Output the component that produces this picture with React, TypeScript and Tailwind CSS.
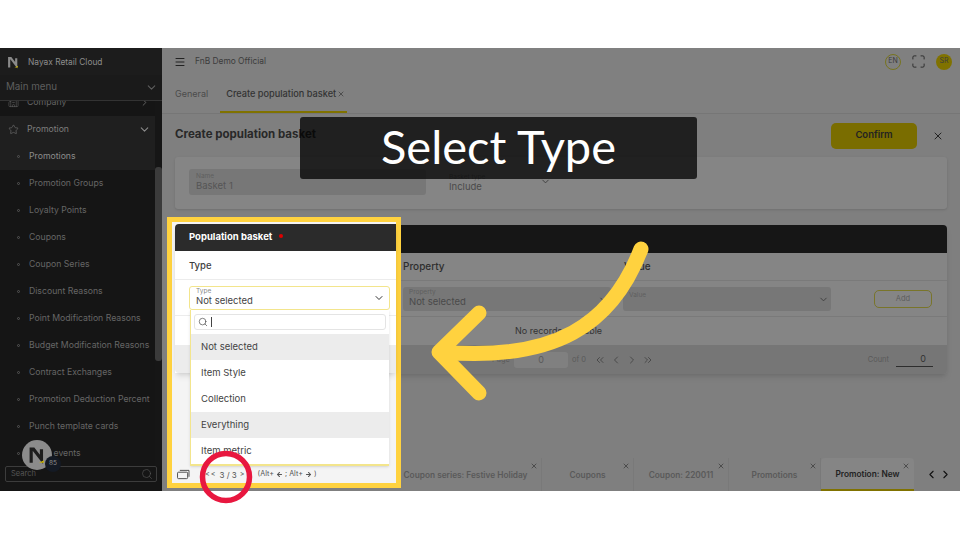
import { ArrowLeft, ArrowRight, Building2, ChevronDown, ChevronLeft, ChevronRight, ChevronsLeft, ChevronsRight, Maximize, Menu, Search, Star, X } from 'lucide-react'

const FONT = "font-['Inter','Liberation_Sans',sans-serif]"

const subItems = [
  'Promotion Groups',
  'Loyalty Points',
  'Coupons',
  'Coupon Series',
  'Discount Reasons',
  'Point Modification Reasons',
  'Budget Modification Reasons',
  'Contract Exchanges',
  'Promotion Deduction Percent',
  'Punch template cards',
  'Profit events',
]

const dockTabs = [
  { label: 'Coupon series: Festive Holiday', width: 'w-[152px]' },
  { label: 'Coupons', width: 'w-[92px]' },
  { label: 'Coupon: 220011', width: 'w-[95px]' },
  { label: 'Promotions', width: 'w-[92px]' },
]

function NLogo({ className }: { className: string }) {
  return (
    <svg viewBox="0 0 24 24" className={className} fill="none">
      <path d="M4 21V4h3l10 13V4" stroke="currentColor" strokeWidth="4" />
      <path d="M14 21l6-3v3z" fill="#c9b400" />
    </svg>
  )
}

function Sidebar() {
  return (
    <aside className="flex w-[162px] shrink-0 flex-col bg-[#151515] text-[8.7px] text-[#666]">
      <div className="flex h-[27px] shrink-0 items-center gap-[8px] bg-[#1c1c1c] pl-[7px] pt-[1px] text-[#8c8c8c]">
        <NLogo className="h-[13px] w-[13px] text-[#8a8a8a]" />
        <span className="text-[8.4px]">Nayax Retail Cloud</span>
      </div>
      <div className="relative z-10 flex h-[26px] shrink-0 items-center justify-between border-b border-[#333] bg-[#1a1a1a] pl-[6px] pr-[4px] text-[9.8px] text-[#5e5e5e]">
        <span>Main menu</span>
        <ChevronDown className="h-[13px] w-[13px]" />
      </div>
      <div className="flex min-h-0 flex-1">
        <div className="-mt-[12px] min-w-0 flex-1 overflow-hidden">
          <div className="flex h-[27px] items-center justify-between pl-[8px] pr-[5px]">
            <span className="flex items-center gap-[8px]">
              <Building2 className="h-[11px] w-[11px]" strokeWidth={1.2} />
              Company
            </span>
            <ChevronRight className="h-[11px] w-[11px]" />
          </div>
          <div className="bg-[#1f1f1f]">
            <div className="flex h-[27px] items-center justify-between pl-[8px] pr-[4px] text-[#7d7d7d]">
              <span className="flex items-center gap-[8px]">
                <Star className="h-[11px] w-[11px]" strokeWidth={1.2} />
                Promotion
              </span>
              <ChevronDown className="h-[13px] w-[13px] text-[#8a8a8a]" />
            </div>
            <div className="flex h-[27px] items-center gap-[9px] pl-[17px] text-[#8c8c8c]">
              <span className="h-[3px] w-[3px] rounded-full border border-[#555]" />
              Promotions
            </div>
          </div>
          {subItems.map((item) => (
            <div key={item} className="flex h-[27px] items-center gap-[9px] whitespace-nowrap pl-[17px]">
              <span className="h-[3px] w-[3px] shrink-0 rounded-full border border-[#555]" />
              {item}
            </div>
          ))}
        </div>
        <div className="w-[7px] shrink-0 bg-[#161616] pt-[66px]">
          <div className="h-[194px] rounded-t-[3px] rounded-b-[3px] bg-[#3b3b3b]" />
        </div>
      </div>
      <div className="shrink-0 px-[5px] pb-[9px]">
        <div className="flex h-[16px] items-center justify-between rounded-[2px] border border-[#3c3c3c] pl-[5px] pr-[3px] text-[7.5px] text-[#555]">
          Search
          <Search className="h-[12px] w-[12px]" strokeWidth={1.3} />
        </div>
      </div>
    </aside>
  )
}

function Field({ label, value, className }: { label: string; value?: string; className: string }) {
  return (
    <div className={`relative flex flex-col rounded-[3px] px-[6px] ${className}`}>
      <span className="text-[6.5px] leading-[8px] text-[#5f5f5f]">{label}</span>
      {value ? <span className="text-[9.5px] leading-[12px] text-[#4a4a4a]">{value}</span> : null}
      <ChevronDown className="absolute right-[2px] top-[7px] h-[11px] w-[11px] text-[#3d3d3d]" />
    </div>
  )
}

function MainPanel() {
  return (
    <main className="flex min-w-0 flex-1 flex-col bg-[#7f7f7f] text-[#3c3c3c]">
      <header className="flex h-[27px] shrink-0 items-center bg-[#808080] pl-[12px] pr-[8px]">
        <Menu className="h-[12px] w-[12px] text-[#222]" />
        <span className="ml-[9px] text-[8.4px]">FnB Demo Official</span>
        <div className="ml-auto flex items-center gap-[10px]">
          <span className="flex h-[16px] w-[16px] items-center justify-center rounded-full border border-[#77741f] text-[7px]">EN</span>
          <Maximize className="h-[15px] w-[15px] text-[#2a2a2a]" strokeWidth={1.5} />
          <span className="flex h-[16px] w-[16px] items-center justify-center rounded-full bg-[#807200] text-[7px]">SR</span>
        </div>
      </header>
      <nav className="flex h-[39px] shrink-0 border-b border-[#767676] bg-[#808080] pl-[7px] text-[9px]">
        <span className="flex items-center px-[6px] text-[#4b4b4b]">General</span>
        <span className="ml-[6px] flex w-[127px] items-center gap-[1px] whitespace-nowrap border-b-2 border-[#807200] pl-[6px] pt-[2px] text-[9.2px] font-medium text-[#333]">
          Create population basket
          <X className="h-[8px] w-[8px]" />
        </span>
      </nav>
      <div className="flex min-h-0 flex-1 flex-col px-[13px]">
        <div className="flex h-[43px] shrink-0 items-center justify-between">
          <h1 className="-mt-[2px] text-[11.5px] font-bold text-[#282828]">Create population basket</h1>
          <div className="flex items-center gap-[15px] pr-[3px]">
            <button type="button" className="h-[26px] w-[86px] rounded-[5px] bg-[#7a6d00] text-[9.5px] font-semibold text-[#222]">Confirm</button>
            <X className="h-[12px] w-[12px] text-[#222]" />
          </div>
        </div>
        <section className="flex h-[52px] shrink-0 items-start gap-[17px] rounded-[3px] bg-[#858585] pl-[14px] pt-[12px] shadow-sm">
          <div className="flex h-[26px] w-[237px] flex-col justify-center rounded-[3px] bg-[#777] px-[7px]">
            <span className="text-[6.5px] leading-[8px] text-[#5f5f5f]">Name</span>
            <span className="text-[9.5px] leading-[12px] text-[#555]">Basket 1</span>
          </div>
          <Field label="Basket type" value="Include" className="h-[26px] w-[110px] pt-[4px]" />
        </section>
        <section className="mt-[16px] flex h-[149px] shrink-0 flex-col rounded-[4px] bg-[#858585] shadow-md">
          <div className="h-[28px] shrink-0 rounded-t-[4px] bg-[#161616]" />
          <div className="flex h-[28px] shrink-0 items-center border-b border-[#7a7a7a] pl-[228px] text-[10px] font-medium text-[#2e2e2e]">
            <span className="w-[221px]">Property</span>
            <span>Value</span>
          </div>
          <div className="flex h-[36px] shrink-0 items-center border-b border-[#7a7a7a] pl-[228px]">
            <Field label="Property" value="Not selected" className="h-[24px] w-[208px] bg-[#777] pt-[1px]" />
            <Field label="Value" className="ml-[12px] h-[24px] w-[208px] bg-[#777] pt-[4px]" />
            <button type="button" className="ml-[43px] h-[18px] w-[58px] rounded-[5px] border border-[#79752a] text-[7.5px] text-[#5e5e5e]">Add</button>
          </div>
          <div className="flex h-[28px] shrink-0 items-center pl-[340px] text-[9px] text-[#333]">No records available</div>
          <div className="flex h-[29px] shrink-0 items-center rounded-b-[4px] bg-[#767676] pl-[317px] pr-[14px] text-[7.5px] text-[#5a5a5a]">
            <span>Page</span>
            <span className="ml-[4px] flex h-[16px] w-[54px] items-center justify-center rounded-[3px] bg-[#808080] text-[9px]">0</span>
            <span className="ml-[4px]">of 0</span>
            <span className="ml-[8px] flex items-center gap-[4px] text-[#4a4a4a]">
              <ChevronsLeft className="h-[12px] w-[12px]" />
              <ChevronLeft className="h-[12px] w-[12px]" />
              <ChevronRight className="h-[12px] w-[12px]" />
              <ChevronsRight className="h-[12px] w-[12px]" />
            </span>
            <span className="ml-auto">Count</span>
            <span className="ml-[7px] w-[37px] border-b border-[#2e2e2e] pr-[7px] text-right text-[9px] text-[#333]">0</span>
          </div>
        </section>
      </div>
      <div className="flex h-[33px] shrink-0 items-stretch justify-end pr-[8px] text-[8.3px] font-semibold text-[#5a5a5a]">
        {dockTabs.map((tab) => (
          <div key={tab.label} className={`relative flex items-center justify-center border-r border-[#797979] pt-[2px] ${tab.width}`}>
            <span className="whitespace-nowrap">{tab.label}</span>
            <X className="absolute right-[3px] top-[4px] h-[8px] w-[8px] text-[#333]" />
          </div>
        ))}
        <div className="relative flex w-[93px] items-center justify-center rounded-t-[4px] border-b-2 border-[#807200] bg-[#858585] pt-[2px] text-[#222]">
          Promotion: New
          <X className="absolute right-[4px] top-[4px] h-[8px] w-[8px] text-[#333]" />
        </div>
        <div className="ml-[11px] flex items-center gap-[1px] text-[#111]">
          <ChevronLeft className="h-[13px] w-[13px]" />
          <ChevronRight className="h-[13px] w-[13px]" />
        </div>
      </div>
    </main>
  )
}

function HighlightBox() {
  const options = [
    { label: 'Not selected', active: true },
    { label: 'Item Style', active: false },
    { label: 'Collection', active: false },
    { label: 'Everything', active: true },
    { label: 'Item metric', active: false },
  ]
  return (
    <div className="absolute left-[167px] top-[217px] flex h-[271px] w-[234px] flex-col border-[5px] border-[#ffd23f] bg-[#f4f4f4] text-[#3d3d3d]">
      <div className="relative ml-[3px] mt-[2px] h-[149px] shrink-0 rounded-t-[4px] bg-white shadow-md">
        <div className="flex h-[27px] items-center gap-[7px] rounded-tl-[4px] bg-[#2b2b2b] pl-[14px] text-[9.5px] font-bold text-white">
          Population basket
          <span className="mb-[3px] h-[4px] w-[4px] rounded-full bg-[#e00000]" />
        </div>
        <div className="flex h-[29px] items-center border-b border-[#ececec] pl-[14px] pt-[2px] text-[9.5px] font-medium">Type</div>
        <div className="h-[36px] border-b border-[#ececec]" />
        <div className="h-[29px]" />
        <div className="h-[28px] rounded-bl-[4px] bg-[#ececec]" />
      </div>
      <div className="absolute left-[17px] top-[64px] w-[201px]">
        <div className="relative flex h-[24px] flex-col rounded-[3px] border border-[#f3e58c] bg-white px-[6px]">
          <span className="text-[6.5px] leading-[8px] text-[#8a8a8a]">Type</span>
          <span className="text-[9.5px] leading-[12px] text-[#444]">Not selected</span>
          <ChevronDown className="absolute right-[4px] top-[5px] h-[12px] w-[12px] text-[#333]" />
        </div>
        <div className="ml-[1px] w-[199px] border-b-2 border-l border-[#f3e58c] bg-white shadow-sm">
          <div className="flex h-[24px] items-center px-[3px]">
            <div className="flex h-[16px] w-full items-center gap-[3px] rounded-[3px] border border-[#e4e4e4] pl-[3px]">
              <Search className="h-[10px] w-[10px] text-[#444]" strokeWidth={1.6} />
              <span className="h-[10px] w-px bg-[#444]" />
            </div>
          </div>
          {options.map((option) => (
            <div key={option.label} className={`flex h-[26px] items-center pl-[10px] text-[9.5px] text-[#444] ${option.active ? 'bg-[#ececec]' : 'bg-white'}`}>
              {option.label}
            </div>
          ))}
        </div>
      </div>
      <div className="mt-auto flex h-[17px] shrink-0 items-center pl-[5px] text-[7.2px] text-[#555]">
        <svg viewBox="0 0 14 12" className="h-[11px] w-[13px] text-[#444]" fill="none" stroke="currentColor" strokeWidth="1">
          <path d="M3 1.5h10v7" />
          <rect x="0.5" y="3.5" width="11" height="7" rx="1" />
        </svg>
        <span className="ml-[15px] tracking-[1px]">&lt;&lt;</span>
        <span className="ml-[3px] text-[8px]">3 / 3</span>
        <span className="ml-[3px]">&gt;</span>
        <span className="ml-[13px] flex items-center gap-[2px] whitespace-nowrap">
          (Alt+
          <ArrowLeft className="h-[7px] w-[7px]" strokeWidth={3.5} />
          ; Alt+
          <ArrowRight className="h-[7px] w-[7px]" strokeWidth={3.5} />)
        </span>
      </div>
    </div>
  )
}

export default function App() {
  return (
    <div className={`relative flex h-[540px] w-[960px] flex-col overflow-hidden bg-white ${FONT}`}>
      <div className="h-[48px] shrink-0" />
      <div className="flex h-[443px] shrink-0">
        <Sidebar />
        <MainPanel />
      </div>

      <div className="absolute left-[22px] top-[440px] flex h-[30px] w-[30px] items-center justify-center rounded-full bg-[#8b8b8b]">
        <NLogo className="h-[19px] w-[19px] text-[#1d1d1d]" />
      </div>
      <div className="absolute left-[45px] top-[456px] flex h-[16px] w-[16px] items-center justify-center rounded-full bg-[#141a24] text-[6.5px] text-[#8a8a8a]">85</div>

      <div className="absolute left-[300px] top-[117px] flex h-[62px] w-[397px] items-center justify-center rounded-[3px] bg-black/75 pb-[3px] font-['Lato',sans-serif] text-[47px] text-white">
        Select Type
      </div>

      <HighlightBox />

      <svg viewBox="0 0 960 540" className="pointer-events-none absolute inset-0 h-[540px] w-[960px]" fill="none">
        <path d="M641 249C612 325 555 362 440 352" stroke="#ffd23f" strokeWidth="15" strokeLinecap="round" />
        <path d="M479 313L439 352L479 393" stroke="#ffd23f" strokeWidth="15" strokeLinecap="round" strokeLinejoin="round" />
        <circle cx="226" cy="477" r="23.5" stroke="#e8173f" strokeWidth="5.5" />
      </svg>
    </div>
  )
}
